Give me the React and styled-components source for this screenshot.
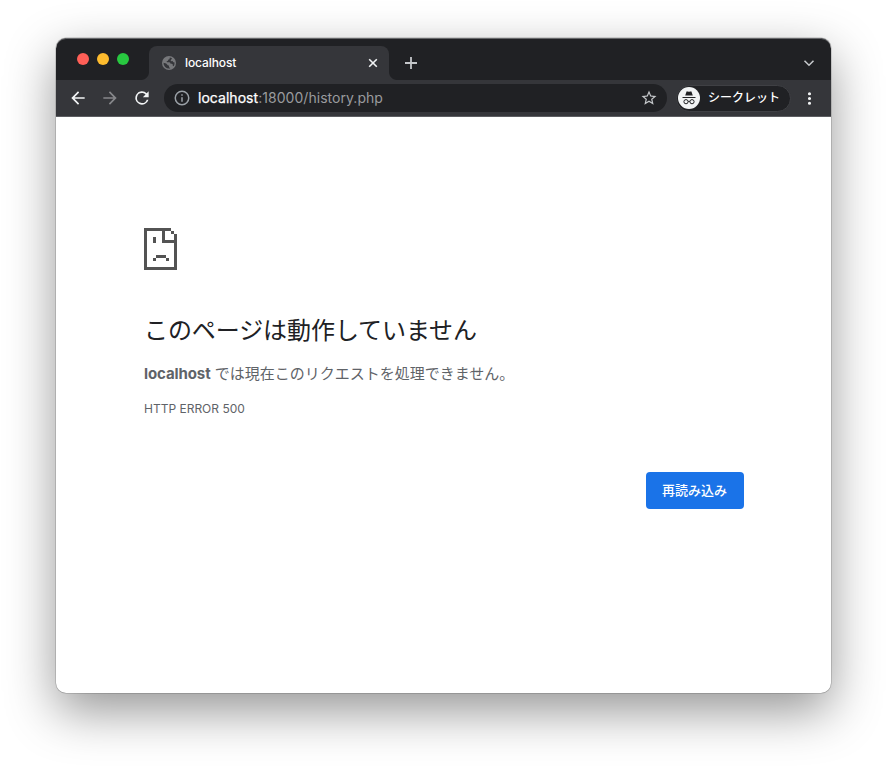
import React from "react";
import styled, { createGlobalStyle } from "styled-components";

const Global = createGlobalStyle`
  * { box-sizing: border-box; }
  body { margin: 0; background: #fff; font-family: Inter, "Noto Sans CJK JP", sans-serif; }
  svg { flex: none; display: block; }
`;

const Desktop = styled.main`
  width: 887px;
  height: 767px;
  padding: 38px 56px 74px;
  overflow: hidden;
`;

const BrowserWindow = styled.div`
  width: 775px;
  height: 655px;
  display: flex;
  flex-direction: column;
  border-radius: 10px;
  overflow: hidden;
  background: #fff;
  box-shadow: 0 0 0 0.5px rgba(0, 0, 0, 0.2), 0 0 1px rgba(0, 0, 0, 0.35), 0 18px 50px rgba(0, 0, 0, 0.42);
`;

const TabStrip = styled.div`
  height: 42px;
  flex: none;
  display: flex;
  align-items: flex-end;
  background: #202124;
  border-radius: 10px 10px 0 0;
  box-shadow: inset 0 1px #66676a;
`;

const Lights = styled.div`
  display: flex;
  gap: 8px;
  width: 93px;
  padding: 15px 0 0 21px;
  align-self: flex-start;
`;

const Light = styled.span`
  width: 12px;
  height: 12px;
  border-radius: 50%;
  background: ${(p) => p.$color};
`;

const Tab = styled.div`
  position: relative;
  width: 240px;
  height: 34px;
  display: flex;
  align-items: center;
  padding: 0 11px 0 13px;
  border-radius: 8px 8px 0 0;
  background: #35363a;
  color: #fff;

  &::before,
  &::after {
    content: "";
    position: absolute;
    bottom: 0;
    width: 8px;
    height: 8px;
  }
  &::before {
    left: -8px;
    background: radial-gradient(circle at 0 0, transparent 7.5px, #35363a 8.5px);
  }
  &::after {
    right: -8px;
    background: radial-gradient(circle at 100% 0, transparent 7.5px, #35363a 8.5px);
  }
`;

const TabTitle = styled.span`
  flex: 1;
  margin-left: 9px;
  font-size: 12px;
  font-weight: 500;
  letter-spacing: -0.1px;
  line-height: 16px;
`;

const StripButton = styled.span`
  height: 34px;
  display: flex;
  align-items: center;
  margin-left: ${(p) => (p.$end ? "auto" : "15px")};
  margin-right: ${(p) => (p.$end ? "16px" : "0")};
`;

const Toolbar = styled.div`
  height: 37px;
  flex: none;
  display: flex;
  align-items: center;
  padding-left: 12px;
  background: #35363a;
  border-bottom: 1px solid #5c5d61;
`;

const Nav = styled.div`
  flex: none;
  display: flex;
  gap: 12px;
  width: 96px;
`;

const AddressBar = styled.div`
  flex: none;
  width: 503px;
  height: 28px;
  display: flex;
  align-items: center;
  padding: 0 9px;
  border-radius: 14px;
  background: #202124;
`;

const Url = styled.span`
  flex: 1;
  margin-left: 7px;
  font-size: 14px;
  line-height: 20px;
  letter-spacing: 0.04px;
  color: #9a9b9e;
`;

const Host = styled.span`
  color: #fff;
  -webkit-text-stroke: 0.25px #fff;
`;

const Incognito = styled.div`
  flex: none;
  width: 115px;
  height: 27px;
  margin-left: 9px;
  display: flex;
  align-items: center;
  padding-left: 1px;
  border: 1px solid #3f4044;
  border-radius: 13.5px;
  background: #202124;
  color: #fff;
  font-size: 12px;
  font-weight: 500;
  line-height: 16px;
  white-space: nowrap;

  span { margin-left: 8px; }
`;

const MenuButton = styled.span`
  display: flex;
  margin-left: 9px;
`;

const Page = styled.section`
  flex: 1;
  width: 600px;
  margin-left: 88px;
  padding-top: 111px;
  display: flex;
  flex-direction: column;
  color: #5f6368;
`;

const Title = styled.h1`
  margin: 42px 0 0;
  font-size: 24px;
  font-weight: 400;
  letter-spacing: -0.08px;
  line-height: 34px;
  color: #202124;
  font-family: "Noto Sans CJK JP", sans-serif;
`;

const Message = styled.p`
  margin: 16px 0 0;
  font-size: 15px;
  line-height: 24px;
  white-space: nowrap;

  strong { font-weight: 700; letter-spacing: -0.1px; }
`;

const ErrorCode = styled.div`
  margin-top: 14px;
  font-size: 12px;
  line-height: 18px;
`;

const Reload = styled.button`
  align-self: flex-end;
  width: 98px;
  height: 37px;
  margin-top: 54px;
  padding: 0 1px 1px 0;
  border: 0;
  border-radius: 4px;
  background: #1a73e8;
  color: #fff;
  font: 500 13px/36px Inter, "Noto Sans CJK JP", sans-serif;
`;

const SadPage = () => (
  <svg width="33" height="42" viewBox="0 0 33 42" fill="#535353" shapeRendering="crispEdges">
    <path fillRule="evenodd" d="M0 0h27v3h-6v9h9V6h3v36H0zM3 3v36h27V15H18V3z" />
    <path d="M27 3h3v3h-3zM9 9h3v6H9zM12 27h10v3H12zM9 30h3v3H9zM22 30h3v3h-3z" />
  </svg>
);

const Globe = () => (
  <svg width="14" height="14" viewBox="0 0 14 14">
    <circle cx="7" cy="7" r="7" fill="#77787b" />
    <path d="M7.800 1.500 7.600 2.700Q7.400 3.500 6.400 3.600L5.900 4.700 4.500 5.500 5 6.300H7.300Q8.600 6.400 8.500 7.800H9.900Q11 8 10.800 9.800L11.500 10.300Q12.700 8.700 12.600 6.500L11.400 6.200 10.500 5 9.200 5.200 8.600 4.300 10.100 2.500Q9 1.700 7.800 1.500z" fill="#35363a" />
    <path d="M1.500 6.800 4.200 7.600 5.800 9.200 7.100 9.700 7 10.900 8.300 12.500Q5.200 13 3.100 10.900 1.400 9.100 1.500 6.800z" fill="#35363a" />
  </svg>
);

const MaterialIcon = ({ d, size = 18, color = "#f1f3f4" }) => (
  <svg width={size} height={size} viewBox="0 0 24 24" fill={color}>
    <path d={d} />
  </svg>
);

const backPath = "M20 11H7.830l5.590-5.590L12 4l-8 8 8 8 1.410-1.410L7.830 13H20z";
const forwardPath = "M12 4l-1.410 1.410L16.170 11H4v2h12.170l-5.580 5.590L12 20l8-8z";
const reloadPath = "M17.650 6.350A8 8 0 1 0 19.730 14h-2.080A6 6 0 1 1 12 6c1.660 0 3.140.69 4.220 1.780L13 11h7V4z";
const starPath = "M22 9.240l-7.190-.62L12 2 9.190 8.630 2 9.240l5.460 4.730L5.820 21 12 17.270 18.180 21l-1.630-7.030zM12 15.400l-3.760 2.270 1-4.280-3.320-2.880 4.380-.38L12 6.100l1.710 4.040 4.380.38-3.320 2.880 1 4.280z";
const infoPath = "M11 7h2v2h-2zm0 4h2v6h-2zm1-9a10 10 0 1 0 0 20 10 10 0 0 0 0-20zm0 18a8 8 0 1 1 0-16 8 8 0 0 1 0 16z";
const menuPath = "M12 8a2 2 0 1 0 0-4 2 2 0 0 0 0 4zm0 2a2 2 0 1 0 0 4 2 2 0 0 0 0-4zm0 6a2 2 0 1 0 0 4 2 2 0 0 0 0-4z";

const IncognitoIcon = () => (
  <svg width="22" height="22" viewBox="0 0 22 22">
    <circle cx="11" cy="11" r="11" fill="#f1f3f4" />
    <path d="M7.200 8.600 8.400 4.900q.2-.7.9-.5l1.700.4 1.700-.4q.7-.2.9.5l1.200 3.700zM4.500 10h13v1H4.500z" fill="#202124" />
    <g fill="none" stroke="#202124" strokeWidth="1">
      <circle cx="8" cy="14.700" r="2.100" />
      <circle cx="14" cy="14.700" r="2.100" />
      <path d="M10.100 14.500q.9-.6 1.800 0" />
    </g>
  </svg>
);

export default function App() {
  return (
    <Desktop>
      <Global />
      <BrowserWindow>
        <TabStrip>
          <Lights>
            <Light $color="#ff5f57" />
            <Light $color="#febc2e" />
            <Light $color="#28c840" />
          </Lights>
          <Tab>
            <Globe />
            <TabTitle>localhost</TabTitle>
            <svg width="10" height="10" viewBox="0 0 10 10" stroke="#f1f3f4" strokeWidth="1.600">
              <path d="M1.200 1.200 8.800 8.800M8.800 1.200 1.200 8.800" />
            </svg>
          </Tab>
          <StripButton>
            <svg width="14" height="14" viewBox="0 0 14 14" stroke="#c4c7ca" strokeWidth="1.800">
              <path d="M7 1v12M1 7h12" />
            </svg>
          </StripButton>
          <StripButton $end>
            <svg width="12" height="12" viewBox="0 0 12 12" fill="none" stroke="#c4c7ca" strokeWidth="1.600">
              <path d="M1.500 3.800 6 8.200 10.500 3.800" />
            </svg>
          </StripButton>
        </TabStrip>
        <Toolbar>
          <Nav>
            <MaterialIcon d={backPath} size={20} />
            <MaterialIcon d={forwardPath} size={20} color="#86878a" />
            <MaterialIcon d={reloadPath} size={20} />
          </Nav>
          <AddressBar>
            <MaterialIcon d={infoPath} size={18} color="#9aa0a6" />
            <Url><Host>localhost</Host>:18000/history.php</Url>
            <MaterialIcon d={starPath} size={18} color="#c4c7ca" />
          </AddressBar>
          <Incognito>
            <IncognitoIcon />
            <span>シークレット</span>
          </Incognito>
          <MenuButton>
            <MaterialIcon d={menuPath} size={19} />
          </MenuButton>
        </Toolbar>
        <Page>
          <SadPage />
          <Title>このページは動作していません</Title>
          <Message><strong>localhost</strong> では現在このリクエストを処理できません。</Message>
          <ErrorCode>HTTP ERROR 500</ErrorCode>
          <Reload>再読み込み</Reload>
        </Page>
      </BrowserWindow>
    </Desktop>
  );
}
